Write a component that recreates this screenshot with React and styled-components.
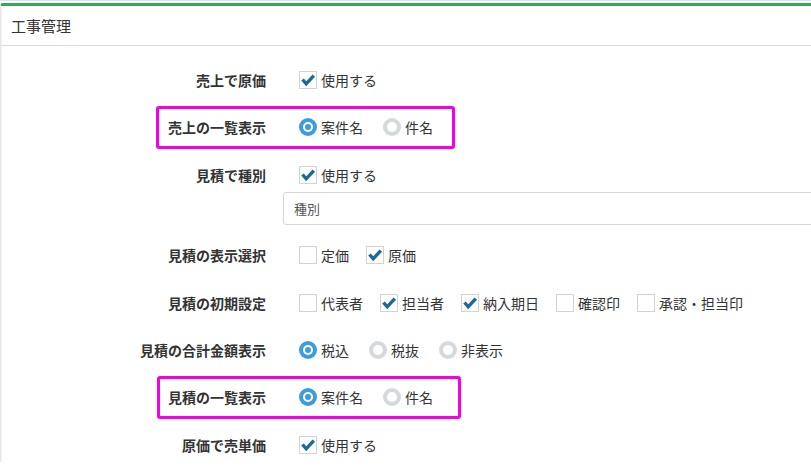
import React from 'react';
import styled, { createGlobalStyle } from 'styled-components';

const GlobalStyle = createGlobalStyle`
  html, body {
    margin: 0;
    padding: 0;
    overflow: hidden;
    background: #fff;
  }
  body {
    font-family: "Noto Sans CJK JP", "Noto Sans", "Liberation Sans", sans-serif;
    color: #333;
  }
`;

const Page = styled.div`
  border-top: 1px solid #d5e5f1;
  padding-top: 2px;
  width: 1000px;
`;

const Panel = styled.div`
  border-top: 3px solid #34a853;
  border-top-left-radius: 3px;
  border-left: 1px solid #e6e6e6;
  box-shadow: inset 2px 0 2px -1px rgba(0, 0, 0, 0.05);
  background: #fff;
`;

const Header = styled.div`
  height: 39px;
  display: flex;
  align-items: center;
  padding-left: 10px;
  border-bottom: 1px solid #dcdcdc;
  font-size: 15px;
  color: #333;
`;

const Body = styled.div`
  padding-top: 17px;
  display: flex;
  flex-direction: column;
  gap: 13.4px;
`;

const Row = styled.div`
  position: relative;
  display: flex;
  align-items: flex-start;
`;

const Label = styled.div`
  width: 265px;
  flex: none;
  height: 34px;
  line-height: 34px;
  text-align: right;
  font-size: 14px;
  font-weight: bold;
  color: #333;
`;

const Controls = styled.div`
  padding-left: 17px;
  display: flex;
  flex-direction: column;
`;

const Options = styled.div`
  height: 34px;
  display: flex;
  align-items: center;
  padding-left: 16px;
  gap: ${p => p.$gap || 18}px;
`;

const Option = styled.label`
  display: flex;
  align-items: center;
  gap: 4px;
  font-size: 14px;
  color: #333;
  white-space: nowrap;
`;

const Box = styled.span`
  width: 16px;
  height: 16px;
  border: 1px solid #d3d3d3;
  background: #fff;
  display: flex;
  align-items: center;
  justify-content: center;
  flex: none;
`;

const Radio = styled.span`
  width: 18px;
  height: 18px;
  box-sizing: border-box;
  border-radius: 50%;
  flex: none;
  display: flex;
  align-items: center;
  justify-content: center;
  background: ${p => (p.$on ? '#3d9be0' : '#d5d9dc')};

  &::after {
    content: '';
    width: ${p => (p.$on ? '6px' : '10px')};
    height: ${p => (p.$on ? '6px' : '10px')};
    border-radius: 50%;
    background: ${p => (p.$on ? '#3d9be0' : '#fff')};
    box-shadow: ${p => (p.$on ? '0 0 0 2px #fff' : 'none')};
  }
`;

const Input = styled.div`
  width: 700px;
  height: 31px;
  border: 1px solid #d2d6de;
  border-radius: 3px;
  display: flex;
  align-items: center;
  padding-left: 10px;
  font-size: 13px;
  color: #555;
`;

const Highlight = styled.div`
  position: absolute;
  box-sizing: border-box;
  left: ${p => p.$left}px;
  width: ${p => p.$width}px;
  top: -4px;
  height: 43px;
  border: 3px solid #f500e4;
  border-radius: 3px;
  pointer-events: none;
`;

const Check = ({ on }) => (
  <Box>
    {on && (
      <svg width="16" height="16" viewBox="0 0 16 16">
        <path d="M2.5 7.5 L6.2 11.8 L13.8 3.6" fill="none" stroke="#17699e" strokeWidth="3.4" />
      </svg>
    )}
  </Box>
);

const CheckOption = ({ on, children }) => (
  <Option>
    <Check on={on} />
    {children}
  </Option>
);

const RadioOption = ({ on, children }) => (
  <Option>
    <Radio $on={on} />
    {children}
  </Option>
);

const App = () => (
  <Page>
    <GlobalStyle />
    <Panel>
      <Header>工事管理</Header>
      <Body>
        <Row>
          <Label>売上で原価</Label>
          <Controls>
            <Options>
              <CheckOption on>使用する</CheckOption>
            </Options>
          </Controls>
        </Row>
        <Row>
          <Highlight $left={155} $width={299} />
          <Label>売上の一覧表示</Label>
          <Controls>
            <Options $gap={20}>
              <RadioOption on>案件名</RadioOption>
              <RadioOption>件名</RadioOption>
            </Options>
          </Controls>
        </Row>
        <Row>
          <Label>見積で種別</Label>
          <Controls>
            <Options>
              <CheckOption on>使用する</CheckOption>
            </Options>
            <Input>種別</Input>
          </Controls>
        </Row>
        <Row>
          <Label>見積の表示選択</Label>
          <Controls>
            <Options $gap={17}>
              <CheckOption>定価</CheckOption>
              <CheckOption on>原価</CheckOption>
            </Options>
          </Controls>
        </Row>
        <Row>
          <Label>見積の初期設定</Label>
          <Controls>
            <Options $gap={17}>
              <CheckOption>代表者</CheckOption>
              <CheckOption on>担当者</CheckOption>
              <CheckOption on>納入期日</CheckOption>
              <CheckOption>確認印</CheckOption>
              <CheckOption>承認・担当印</CheckOption>
            </Options>
          </Controls>
        </Row>
        <Row>
          <Label>見積の合計金額表示</Label>
          <Controls>
            <Options $gap={20}>
              <RadioOption on>税込</RadioOption>
              <RadioOption>税抜</RadioOption>
              <RadioOption>非表示</RadioOption>
            </Options>
          </Controls>
        </Row>
        <Row>
          <Highlight $left={156} $width={304} />
          <Label>見積の一覧表示</Label>
          <Controls>
            <Options $gap={20}>
              <RadioOption on>案件名</RadioOption>
              <RadioOption>件名</RadioOption>
            </Options>
          </Controls>
        </Row>
        <Row>
          <Label>原価で売単価</Label>
          <Controls>
            <Options>
              <CheckOption on>使用する</CheckOption>
            </Options>
          </Controls>
        </Row>
      </Body>
    </Panel>
  </Page>
);

export default App;
